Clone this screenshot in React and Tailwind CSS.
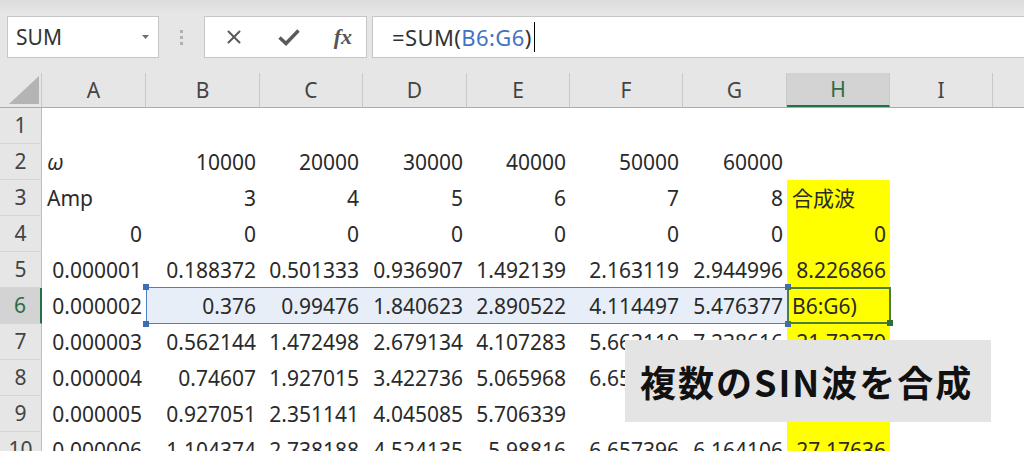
import { X } from "lucide-react";

const cols = [
  { l: "A", w: 104 },
  { l: "B", w: 114 },
  { l: "C", w: 103 },
  { l: "D", w: 104 },
  { l: "E", w: 103 },
  { l: "F", w: 113 },
  { l: "G", w: 104 },
  { l: "H", w: 103 },
  { l: "I", w: 103 },
  { l: "J", w: 100 },
];

// one array per row, columns A..H; objects are left-aligned text
const rows = [
  [],
  [{ t: "ω", italic: true }, "10000", "20000", "30000", "40000", "50000", "60000", ""],
  [{ t: "Amp" }, "3", "4", "5", "6", "7", "8", { t: "合成波" }],
  ["0", "0", "0", "0", "0", "0", "0", "0"],
  ["0.000001", "0.188372", "0.501333", "0.936907", "1.492139", "2.163119", "2.944996", "8.226866"],
  ["0.000002", "0.376", "0.99476", "1.840623", "2.890522", "4.114497", "5.476377", { t: "B6:G6)" }],
  ["0.000003", "0.562144", "1.472498", "2.679134", "4.107283", "5.663119", "7.238616", "21.72279"],
  ["0.000004", "0.74607", "1.927015", "3.422736", "5.065968", "6.659197", "", ""],
  ["0.000005", "0.927051", "2.351141", "4.045085", "5.706339", "", "", ""],
  ["0.000006", "1.104374", "2.738188", "4.524135", "5.98816", "6.657396", "6.164106", "27.17636"],
];

const Cell = ({ value, w, row, col }) => {
  const yellow = col === 7 && row >= 3;
  const selected = row === 6 && col >= 1 && col <= 6;
  let bg = "bg-white";
  if (yellow) bg = "bg-[#ffff00]";
  if (selected) bg = "bg-[#e8eef8]";
  const isText = value && typeof value === "object";
  return (
    <div
      style={{ width: w }}
      className={`h-[36px] shrink-0 flex items-center ${bg} ${
        isText ? "justify-start pl-[5px]" : "justify-end pr-[4px]"
      }`}
    >
      {isText ? (
        <span className={value.italic ? "italic" : ""}>{value.t}</span>
      ) : (
        <span>{value}</span>
      )}
    </div>
  );
};

const App = () => {
  return (
    <div className="w-[1024px] h-[451px] overflow-hidden relative bg-[#e6e6e6] font-['Noto_Sans','Noto_Sans_CJK_JP',sans-serif] text-[21px] leading-none text-[#2a2a2a]">
      {/* ribbon edge */}
      <div className="h-[16px] bg-gradient-to-b from-[#dcdcdc] to-[#e8e8e8]" />

      {/* formula bar */}
      <div className="h-[42px] flex items-stretch">
        <div className="ml-[7px] w-[152px] bg-white border border-[#c6c6c6] flex items-center justify-between pl-[8px] pr-[9px]">
          <span className="text-[21px] text-[#333]">SUM</span>
          <svg width="7" height="4" viewBox="0 0 7 4">
            <path d="M0 0 L7 0 L3.5 4 Z" fill="#707070" />
          </svg>
        </div>
        <div className="w-[45px] flex flex-col items-center justify-center gap-[3px]">
          <div className="w-[3px] h-[3px] bg-[#b0b0b0]" />
          <div className="w-[3px] h-[3px] bg-[#b0b0b0]" />
          <div className="w-[3px] h-[3px] bg-[#b0b0b0]" />
        </div>
        <div className="w-[163px] bg-white border border-[#c6c6c6] flex items-center justify-between pl-[18px] pr-[14px]">
          <X size={22} strokeWidth={2.2} color="#5a5a5a" />
          <svg width="22" height="18" viewBox="0 0 22 18">
            <path d="M1.5 9.5 L8 15.5 L20.5 2.5" fill="none" stroke="#5a5a5a" strokeWidth="3.4" strokeLinejoin="miter" />
          </svg>
          <span className="font-['Liberation_Serif',serif] italic font-bold text-[22px] text-[#555]">fx</span>
        </div>
        <div className="ml-[5px] flex-1 bg-white border border-[#c6c6c6] border-r-0 flex items-center pl-[19px]">
          <span className="text-[22px] tracking-[0.4px] text-[#333]">
            =SUM(<span className="text-[#4472c4]">B6:G6</span>)
          </span>
          <div className="w-px h-[30px] bg-black ml-[2px]" />
        </div>
      </div>

      <div className="h-[15px]" />

      {/* column headers */}
      <div className="h-[35px] flex border-b border-[#ababab]">
        <div className="w-[42px] shrink-0 flex items-end justify-end pr-[2px] pb-[3px] border-r border-[#c9c9c9]">
          <svg width="30" height="28" viewBox="0 0 30 28">
            <path d="M30 0 L30 28 L0 28 Z" fill="#b4b4b4" />
          </svg>
        </div>
        {cols.map((c) => (
          <div
            key={c.l}
            style={{ width: c.w }}
            className={`shrink-0 flex items-center justify-center border-r border-[#c9c9c9] text-[21px] ${
              c.l === "H"
                ? "bg-[#d3d3d3] text-[#2f6b45] border-b-2 border-b-[#217346]"
                : "text-[#444]"
            }`}
          >
            {c.l}
          </div>
        ))}
      </div>

      {/* grid */}
      <div className="flex flex-col">
        {rows.map((r, i) => {
          const row = i + 1;
          return (
            <div key={row} className="flex h-[36px]">
              <div
                className={`w-[42px] shrink-0 flex items-center justify-center border-b border-[#d4d4d4] ${
                  row === 6
                    ? "bg-[#d3d3d3] text-[#2f6b45] border-r-2 border-r-[#217346]"
                    : "bg-[#e6e6e6] text-[#444] border-r border-r-[#bdbdbd]"
                }`}
              >
                {row}
              </div>
              {cols.map((c, ci) => (
                <Cell key={c.l} value={r[ci] ?? ""} w={c.w} row={row} col={ci} />
              ))}
            </div>
          );
        })}
      </div>

      {/* range reference B6:G6 */}
      <div className="absolute left-[146px] top-[287px] w-[642px] h-[37px] border-[1.5px] border-[#4f7fc0] pointer-events-none">
        <div className="absolute -left-[4px] -top-[4px] w-[6px] h-[6px] bg-[#3e6db3]" />
        <div className="absolute -right-[4px] -top-[4px] w-[6px] h-[6px] bg-[#3e6db3]" />
        <div className="absolute -left-[4px] -bottom-[4px] w-[6px] h-[6px] bg-[#3e6db3]" />
        <div className="absolute -right-[4px] -bottom-[4px] w-[6px] h-[6px] bg-[#3e6db3]" />
      </div>

      {/* active cell H6 */}
      <div className="absolute left-[787px] top-[287px] w-[104px] h-[37px] border-2 border-[#4c7d3a] pointer-events-none">
        <div className="absolute -right-[4px] -bottom-[4px] w-[6px] h-[6px] bg-[#2f6e3a]" />
      </div>

      {/* caption */}
      <div className="absolute left-[625px] top-[340px] w-[366px] h-[82px] bg-[#e4e4e4] flex items-center pl-[15px]">
        <span className="font-['Noto_Sans_CJK_JP',sans-serif] font-bold text-[36px] tracking-[2px] text-[#111]">
          複数のSIN波を合成
        </span>
      </div>
    </div>
  );
};

export default App;
